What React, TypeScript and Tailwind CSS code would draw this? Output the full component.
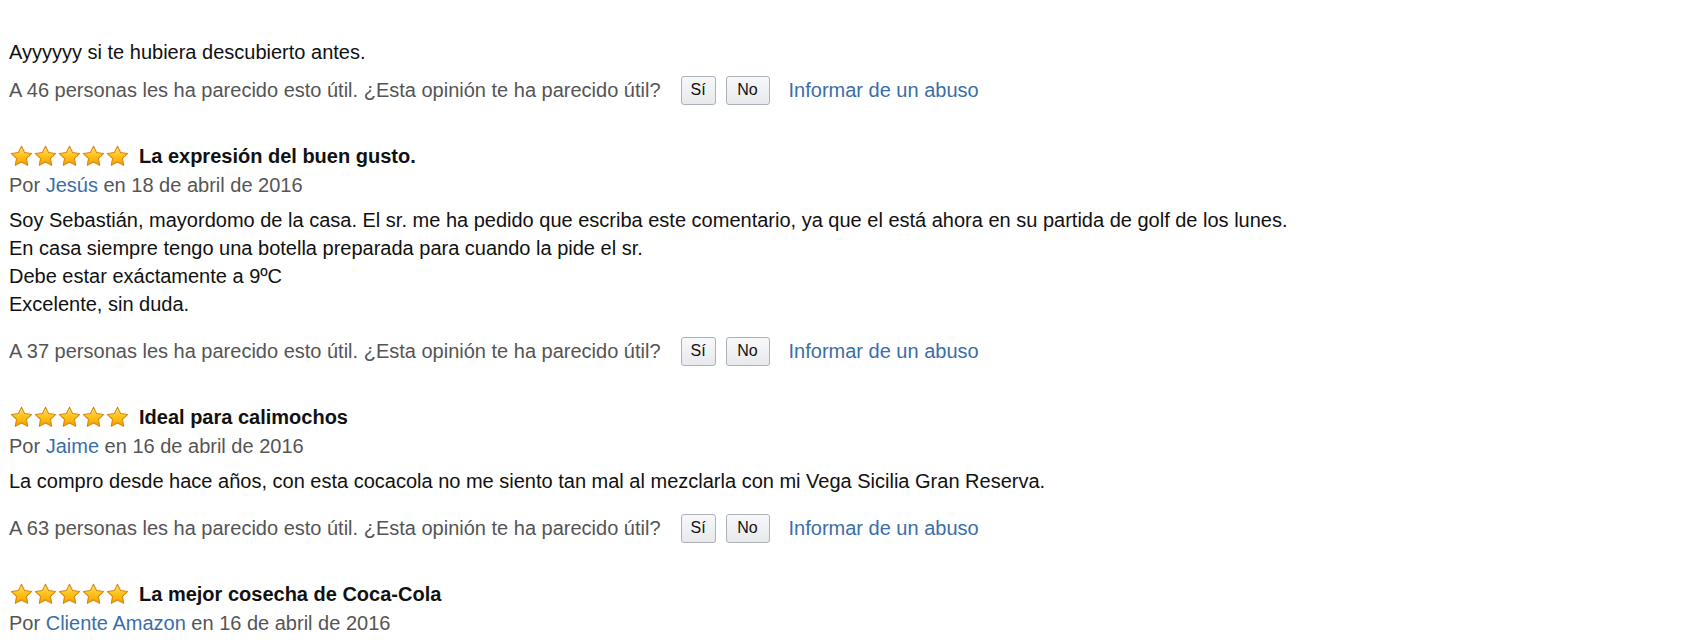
import React from "react";

const Star = ({ id }: { id: string }) => (
  <svg width="23" height="22" viewBox="0 0 24 23" className="shrink-0">
    <defs>
      <linearGradient id={id} x1="0" y1="0" x2="0" y2="1">
        <stop offset="0" stopColor="#ffe27a" />
        <stop offset="0.5" stopColor="#ffc21a" />
        <stop offset="1" stopColor="#f39c00" />
      </linearGradient>
    </defs>
    <path
      d="M12 1.2l3.2 6.7 7.3 1-5.3 5.1 1.3 7.3L12 17.8l-6.5 3.5 1.3-7.3L1.5 8.9l7.3-1z"
      fill={`url(#${id})`}
      stroke="#d4870a"
      strokeWidth="1.1"
      strokeLinejoin="round"
    />
  </svg>
);

const Stars = ({ k }: { k: string }) => (
  <div className="flex items-center gap-[1px] ml-[1px]">
    {[0, 1, 2, 3, 4].map((i) => (
      <Star key={i} id={`g-${k}-${i}`} />
    ))}
  </div>
);

const Helpful = ({ n }: { n: number }) => (
  <div className="flex items-center h-[30px] text-[#555555]">
    <span>
      A {n} personas les ha parecido esto útil. ¿Esta opinión te ha parecido útil?
    </span>
    <button className="ml-[20px] h-[29px] w-[35px] rounded-[3px] border border-[#adb1b8] bg-gradient-to-b from-[#f7f8fa] to-[#e7e9ec] text-[16px] text-[#111111] leading-none">
      Sí
    </button>
    <button className="ml-[10px] h-[29px] w-[44px] rounded-[3px] border border-[#adb1b8] bg-gradient-to-b from-[#f7f8fa] to-[#e7e9ec] text-[16px] text-[#111111] leading-none">
      No
    </button>
    <a className="ml-[19px] text-[#3a6ea8]">Informar de un abuso</a>
  </div>
);

type Review = {
  title: string;
  author: string;
  date: string;
  body?: string[];
  helpful?: number;
};

const reviews: Review[] = [
  {
    title: "La expresión del buen gusto.",
    author: "Jesús",
    date: "18 de abril de 2016",
    body: [
      "Soy Sebastián, mayordomo de la casa. El sr. me ha pedido que escriba este comentario, ya que el está ahora en su partida de golf de los lunes.",
      "En casa siempre tengo una botella preparada para cuando la pide el sr.",
      "Debe estar exáctamente a 9ºC",
      "Excelente, sin duda.",
    ],
    helpful: 37,
  },
  {
    title: "Ideal para calimochos",
    author: "Jaime",
    date: "16 de abril de 2016",
    body: [
      "La compro desde hace años, con esta cocacola no me siento tan mal al mezclarla con mi Vega Sicilia Gran Reserva.",
    ],
    helpful: 63,
  },
  {
    title: "La mejor cosecha de Coca-Cola",
    author: "Cliente Amazon",
    date: "16 de abril de 2016",
  },
];

export default function App() {
  return (
    <div
      className="w-[1706px] h-[640px] overflow-hidden bg-white text-[20px] leading-[28px] text-[#111111] pl-[9px] pt-[38px]"
      style={{ fontFamily: '"Liberation Sans", Arial, sans-serif' }}
    >
      <div className="flex flex-col">
        <p>Ayyyyyy si te hubiera descubierto antes.</p>
        <div className="mt-[9px]">
          <Helpful n={46} />
        </div>
        {reviews.map((r, idx) => (
          <div key={idx} className="mt-[35px] flex flex-col">
            <div className="flex items-center h-[31px] gap-[10px]">
              <Stars k={String(idx)} />
              <span className="font-bold text-[#111111]">{r.title}</span>
            </div>
            <div className="text-[#555555]">
              Por <a className="text-[#3a6ea8]">{r.author}</a> en {r.date}
            </div>
            {r.body && (
              <div className="mt-[7px] flex flex-col">
                {r.body.map((l, i) => (
                  <p key={i}>{l}</p>
                ))}
              </div>
            )}
            {r.helpful !== undefined && (
              <div className="mt-[18px]">
                <Helpful n={r.helpful} />
              </div>
            )}
          </div>
        ))}
      </div>
    </div>
  );
}
